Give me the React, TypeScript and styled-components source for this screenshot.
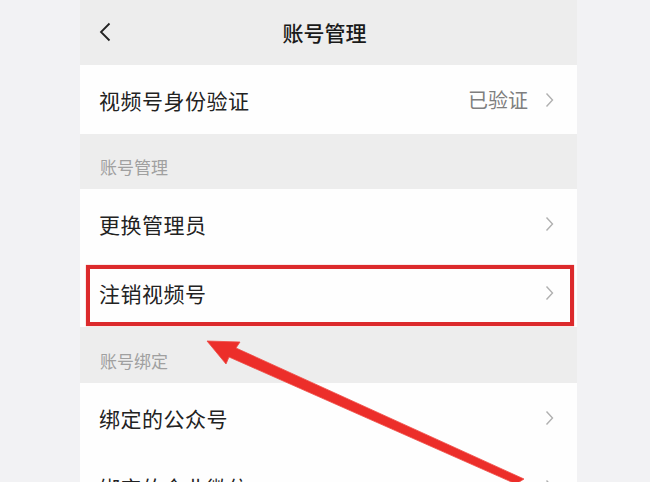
import styled, { createGlobalStyle } from 'styled-components';

const GlobalStyle = createGlobalStyle`
  html, body {
    margin: 0;
    padding: 0;
    background: #f2f2f4;
  }
  body {
    font-family: "Noto Sans CJK SC", "Noto Sans", sans-serif;
  }
`;

const Page = styled.div`
  position: relative;
  width: 650px;
  height: 482px;
  overflow: hidden;
  background: #f2f2f4;
`;

const Phone = styled.div`
  margin-left: 80px;
  width: 497px;
  min-height: 482px;
  background: #ededed;
`;

const NavBar = styled.div`
  height: 65px;
  display: grid;
  grid-template-columns: 60px 1fr 60px;
  align-items: center;
  padding-bottom: 2px;
  box-sizing: border-box;
`;

const BackButton = styled.div`
  padding-left: 19px;
  display: flex;
  align-items: center;
`;

const Title = styled.div`
  text-align: center;
  font-size: 21px;
  font-weight: 500;
  color: #1a1a1a;
  margin-left: -8px;
`;

const Card = styled.div`
  background: #fefefe;
`;

const Row = styled.div`
  height: 69px;
  display: flex;
  align-items: center;
  padding: 0 23px 0 19px;
  font-size: 21px;
  color: #222;
`;

const RowLabel = styled.span`
  flex: 1;
  letter-spacing: 0.5px;
`;

const RowValue = styled.span`
  color: #7f7f7f;
  font-size: 20px;
  margin-right: 17px;
`;

const SectionLabel = styled.div<{ $h: number }>`
  height: ${(p) => p.$h}px;
  display: flex;
  align-items: flex-end;
  padding: 0 0 10px 20px;
  box-sizing: border-box;
  font-size: 17px;
  color: #a0a0a0;
`;

const Highlight = styled.div`
  position: absolute;
  left: 86px;
  top: 265px;
  width: 488px;
  height: 61px;
  box-sizing: border-box;
  border: 4px solid #dc2a2c;
  box-shadow: 0 0 1px rgba(220, 42, 44, 0.6);
`;

const ArrowLayer = styled.svg`
  position: absolute;
  left: 0;
  top: 0;
  pointer-events: none;
`;

const Chevron = () => (
  <svg width="9" height="16" viewBox="0 0 9 16">
    <path d="M1.5 1.5 L7.5 8 L1.5 14.5" fill="none" stroke="#b0b0b0" strokeWidth="1.4" />
  </svg>
);

const BackIcon = () => (
  <svg width="12" height="20" viewBox="0 0 12 20">
    <path d="M10.5 1.5 L2 10 L10.5 18.5" fill="none" stroke="#222" strokeWidth="1.8" />
  </svg>
);

const Item = ({ label, value }: { label: string; value?: string }) => (
  <Row>
    <RowLabel>{label}</RowLabel>
    {value && <RowValue>{value}</RowValue>}
    <Chevron />
  </Row>
);

export default function App() {
  return (
    <>
      <GlobalStyle />
      <Page>
        <Phone>
          <NavBar>
            <BackButton>
              <BackIcon />
            </BackButton>
            <Title>账号管理</Title>
            <span />
          </NavBar>
          <Card>
            <Item label="视频号身份验证" value="已验证" />
          </Card>
          <SectionLabel $h={55}>账号管理</SectionLabel>
          <Card>
            <Item label="更换管理员" />
            <Item label="注销视频号" />
          </Card>
          <SectionLabel $h={56}>账号绑定</SectionLabel>
          <Card>
            <Item label="绑定的公众号" />
            <Item label="绑定的企业微信" />
          </Card>
        </Phone>
        <Highlight />
        <ArrowLayer width="650" height="482" viewBox="0 0 650 482">
          <path
            d="M207 341 L240 342 L236 348 L524 479 L516 484 L229 357 L226 364 Z"
            fill="#ec2e2a"
            stroke="#ef4a44"
            strokeWidth="0.8"
            strokeLinejoin="round"
          />
        </ArrowLayer>
      </Page>
    </>
  );
}
